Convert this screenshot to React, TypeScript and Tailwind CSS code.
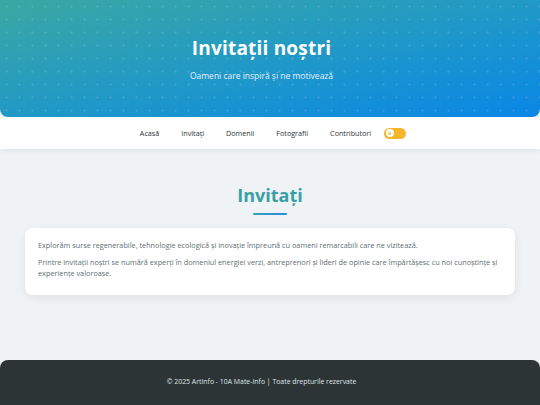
import { useState } from 'react';

const navLinks = ['Acasă', 'Invitați', 'Domenii', 'Fotografii', 'Contributori'];

const ThemeToggle = () => {
  const [dark, setDark] = useState(false);
  return (
    <button
      onClick={() => setDark(!dark)}
      className={`ml-[-9px] flex h-[11px] w-[22px] items-center rounded-full px-[1.5px] ${dark ? 'justify-end bg-[#2d3436]' : 'justify-start bg-[#f7b52c]'}`}
    >
      <span className="flex h-[8px] w-[8px] items-center justify-center rounded-full bg-white">
        <span className="h-[3px] w-[3px] rounded-full bg-[#f7c75a]"></span>
      </span>
    </button>
  );
};

const App = () => {
  return (
    <div className="flex min-h-screen flex-col bg-[#f0f3f6] font-['Open_Sans',sans-serif]">
      {/* Hero */}
      <header className="relative h-[117px] overflow-hidden rounded-b-[8px] bg-gradient-to-br from-[#3aa8a2] to-[#0a86e6]">
        <div className="absolute inset-0 bg-[radial-gradient(rgba(255,255,255,0.10)_1px,transparent_1.2px)] bg-[size:13px_13px]"></div>
        <div className="relative flex flex-col items-center pt-[34px] pr-[17px]">
          <h1 className="text-[19px] font-bold leading-[28px] tracking-[0.2px] text-white">Invitații noștri</h1>
          <p className="mt-[8px] text-[8.5px] leading-[12px] text-[#e3f1fb]">Oameni care inspiră și ne motivează</p>
        </div>
      </header>

      {/* Navigation */}
      <nav className="flex h-[32px] items-center justify-center gap-[22px] bg-white pl-[6px] shadow-[0_2px_6px_rgba(0,0,0,0.06)]">
        {navLinks.map((link) => (
          <a key={link} href="#" className="text-[7.2px] font-medium text-[#2d3436]">
            {link}
          </a>
        ))}
        <ThemeToggle />
      </nav>

      {/* Content */}
      <main className="flex flex-1 flex-col items-center px-[25px] pt-[34px] pb-[63px]">
        <h2 className="text-[18px] font-bold leading-[24px] text-[#3a9fa5]">Invitați</h2>
        <div className="mt-[6px] h-[2px] w-[34px] rounded-full bg-gradient-to-r from-[#3aa2b6] to-[#1f8fdc]"></div>
        <div className="mt-[13px] w-full rounded-[8px] bg-white px-[13px] pt-[12px] pb-[16px] shadow-[0_3px_10px_rgba(0,0,0,0.07)]">
          <p className="text-[7.3px] leading-[11px] text-[#636e72]">
            Explorăm surse regenerabile, tehnologie ecologică și inovație împreună cu oameni remarcabili care ne vizitează.
          </p>
          <p className="mt-[6px] text-[7.3px] leading-[11px] text-[#636e72]">
            Printre invitații noștri se numără experți în domeniul energiei verzi, antreprenori și lideri de opinie care împărtășesc cu noi cunoștințe și experiențe valoroase.
          </p>
        </div>
      </main>

      {/* Footer */}
      <footer className="flex h-[45px] items-center justify-center rounded-t-[8px] bg-[#2d3436] pr-[17px]">
        <p className="text-[6.9px] text-[#dfe6e9]">© 2025 ArtInfo - 10A Mate-Info | Toate drepturile rezervate</p>
      </footer>
    </div>
  );
};

export default App;
